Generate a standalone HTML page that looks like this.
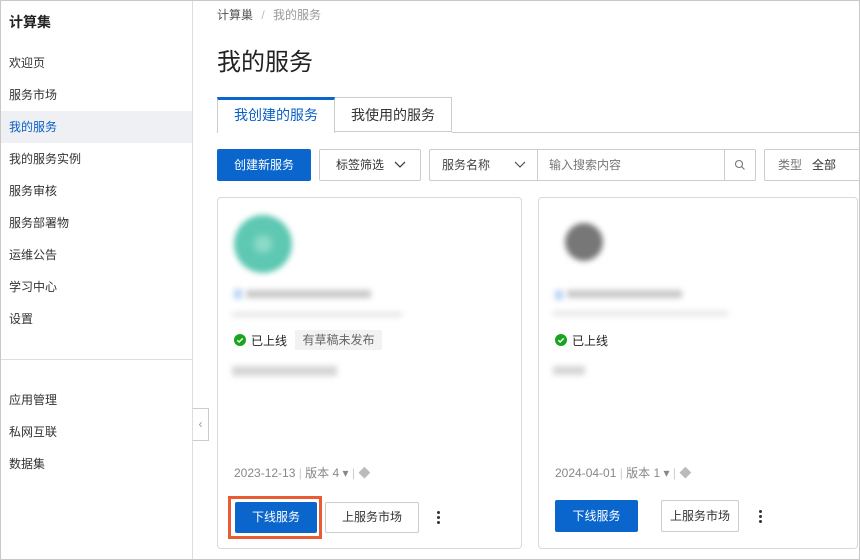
<!DOCTYPE html>
<html><head><meta charset="utf-8"><style>
*{box-sizing:border-box;margin:0;padding:0}
body{width:860px;height:560px;overflow:hidden;background:#fff;font-family:"Liberation Sans","Noto Sans CJK SC",sans-serif;color:#333;position:relative}
.frame{position:absolute;left:0;top:0;width:860px;height:560px;border:1px solid #c8c8c8;pointer-events:none;z-index:9}
.side{position:absolute;left:0;top:0;width:193px;height:560px;border-right:1px solid #ddd;background:#fff}
.side .t{position:absolute;left:9px;top:12px;font-size:14px;font-weight:bold;color:#222}
.side .i{position:absolute;left:0;width:192px;height:32px;line-height:32px;padding-left:9px;font-size:12px;color:#333}
.side .act{background:#eef0f4;color:#0a5fc7}
.abs{position:absolute}
.btn{position:absolute;font-size:12px;text-align:center;border:1px solid #ccc;background:#fff;color:#333;border-radius:2px}
.pri{background:#0a66cc;border-color:#0a66cc;color:#fff}
.card{position:absolute;top:197px;height:352px;border:1px solid #d9d9d9;border-radius:4px;background:#fff}
.blur{position:absolute;filter:blur(3px)}
.meta{position:absolute;font-size:12px;color:#888}
.dot{position:absolute;width:3px;height:3px;background:#333;border-radius:50%}
</style></head><body>
<div class="side">
<div class="t">计算集</div>
<div class="i" style="top:47px">欢迎页</div>
<div class="i" style="top:79px">服务市场</div>
<div class="i act" style="top:111px">我的服务</div>
<div class="i" style="top:143px">我的服务实例</div>
<div class="i" style="top:175px">服务审核</div>
<div class="i" style="top:207px">服务部署物</div>
<div class="i" style="top:239px">运维公告</div>
<div class="i" style="top:271px">学习中心</div>
<div class="i" style="top:303px">设置</div>
<div class="abs" style="left:0;top:359px;width:192px;height:1px;background:#ddd"></div>
<div class="i" style="top:384px">应用管理</div>
<div class="i" style="top:416px">私网互联</div>
<div class="i" style="top:448px">数据集</div>
</div>
<div class="abs" style="left:193px;top:408px;width:16px;height:33px;border:1px solid #ccc;border-left:none;background:#fff;font-size:12px;color:#999;line-height:31px;text-align:center">‹</div>

<div class="abs" style="left:217px;top:6px;font-size:12px;color:#555">计算巢 <span style="color:#bbb;margin:0 5px">/</span> <span style="color:#999">我的服务</span></div>
<div class="abs" style="left:217px;top:42px;font-size:24px;color:#222">我的服务</div>

<div class="abs" style="left:217px;top:97px;width:118px;height:36px;border:1px solid #ccc;border-top:3px solid #0a66cc;border-bottom:none;font-size:14px;color:#0a5fc7;text-align:center;line-height:31px;background:#fff">我创建的服务</div>
<div class="abs" style="left:335px;top:97px;width:117px;height:35px;border:1px solid #ccc;border-left:none;font-size:14px;color:#333;text-align:center;line-height:34px">我使用的服务</div>
<div class="abs" style="left:452px;top:132px;width:408px;height:1px;background:#ccc"></div>

<div class="btn pri" style="left:217px;top:149px;width:94px;height:32px;line-height:30px">创建新服务</div>
<div class="btn" style="left:319px;top:149px;width:102px;height:32px;line-height:30px;text-align:left;padding-left:16px">标签筛选<svg style="position:absolute;left:74px;top:10px" width="12" height="10"><path d="M1 2l5 5 5-5" fill="none" stroke="#444" stroke-width="1.3"/></svg></div>
<div class="btn" style="left:429px;top:149px;width:327px;height:32px;line-height:30px;text-align:left">
<span style="position:absolute;left:12px;color:#444">服务名称</span>
<svg style="position:absolute;left:84px;top:10px" width="12" height="10"><path d="M1 2l5 5 5-5" fill="none" stroke="#444" stroke-width="1.1"/></svg>
<span style="position:absolute;left:107px;top:0;height:30px;border-left:1px solid #ccc"></span>
<span style="position:absolute;left:119px;color:#777">输入搜索内容</span>
<span style="position:absolute;left:294px;top:0;height:30px;border-left:1px solid #ccc"></span>
<svg style="position:absolute;left:304px;top:9px" width="12" height="12"><circle cx="5" cy="5" r="3.5" fill="none" stroke="#777" stroke-width="1.1"/><path d="M7.5 7.5l3 3" stroke="#777" stroke-width="1.1"/></svg>
</div>
<div class="btn" style="left:764px;top:149px;width:100px;height:32px;line-height:30px;text-align:left;padding-left:13px"><span style="color:#777">类型</span>&nbsp;&nbsp;&nbsp;全部</div>

<div class="card" style="left:217px;width:305px">
<div class="blur" style="left:16px;top:17px;width:58px;height:58px;border-radius:50%;background:#5ec8b2"></div>
<div class="blur" style="left:36px;top:37px;width:18px;height:18px;border-radius:50%;background:#8fdccb;filter:blur(4px)"></div>
<div class="blur" style="left:16px;top:91px;width:8px;height:10px;background:#b8d4f5"></div>
<div class="blur" style="left:28px;top:92px;width:125px;height:8px;background:#c8c8c8"></div>
<div class="blur" style="left:14px;top:114px;width:170px;height:5px;background:#e6e6e6"></div>
<svg class="abs" style="left:16px;top:136px" width="12" height="12"><circle cx="6" cy="6" r="6" fill="#1aa31e"/><path d="M3.3 6.2l1.8 1.8 3.6-3.6" stroke="#fff" stroke-width="1.4" fill="none"/></svg>
<div class="abs" style="left:33px;top:134px;font-size:12px;color:#222">已上线</div>
<div class="abs" style="left:77px;top:132px;width:87px;height:20px;background:#f2f2f2;font-size:12px;color:#666;line-height:20px;text-align:center">有草稿未发布</div>
<div class="blur" style="left:14px;top:168px;width:105px;height:10px;background:#d6d6d6"></div>
<div class="meta" style="left:16px;top:266px">2023-12-13 <span style="color:#ccc">|</span> 版本 4 ▾ <span style="color:#ccc">|</span> <span style="color:#bbb">◆</span></div>
<div class="abs" style="left:10px;top:298px;width:94px;height:43px;border:3px solid #e85b33"></div>
<div class="btn pri" style="left:17px;top:304px;width:82px;height:31px;line-height:29px">下线服务</div>
<div class="btn" style="left:107px;top:304px;width:94px;height:31px;line-height:29px">上服务市场</div>
<div class="dot" style="left:219px;top:313px"></div><div class="dot" style="left:219px;top:318px"></div><div class="dot" style="left:219px;top:323px"></div>
</div>

<div class="card" style="left:538px;width:320px">
<div class="blur" style="left:26px;top:25px;width:38px;height:38px;border-radius:50%;background:#777"></div>
<div class="blur" style="left:16px;top:92px;width:8px;height:10px;background:#b8d4f5"></div>
<div class="blur" style="left:28px;top:92px;width:115px;height:8px;background:#c8c8c8"></div>
<div class="blur" style="left:14px;top:113px;width:175px;height:5px;background:#e6e6e6"></div>
<svg class="abs" style="left:16px;top:136px" width="12" height="12"><circle cx="6" cy="6" r="6" fill="#1aa31e"/><path d="M3.3 6.2l1.8 1.8 3.6-3.6" stroke="#fff" stroke-width="1.4" fill="none"/></svg>
<div class="abs" style="left:33px;top:134px;font-size:12px;color:#222">已上线</div>
<div class="blur" style="left:14px;top:168px;width:32px;height:9px;background:#d6d6d6"></div>
<div class="meta" style="left:16px;top:266px">2024-04-01 <span style="color:#ccc">|</span> 版本 1 ▾ <span style="color:#ccc">|</span> <span style="color:#bbb">◆</span></div>
<div class="btn pri" style="left:16px;top:302px;width:83px;height:32px;line-height:30px">下线服务</div>
<div class="btn" style="left:122px;top:302px;width:78px;height:32px;line-height:30px">上服务市场</div>
<div class="dot" style="left:220px;top:312px"></div><div class="dot" style="left:220px;top:317px"></div><div class="dot" style="left:220px;top:322px"></div>
</div>
<div class="frame"></div>
</body></html>
